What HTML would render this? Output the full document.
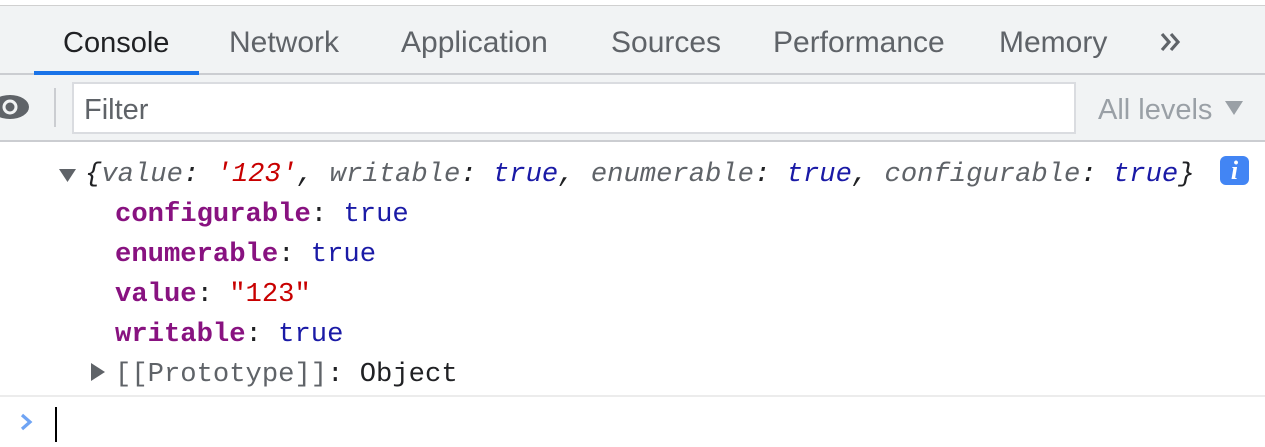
<!DOCTYPE html>
<html><head><style>
html,body{margin:0;padding:0;width:1265px;height:447px;overflow:hidden;background:#fff;position:relative}
.a{position:absolute;white-space:pre}
.tab{position:absolute;top:23px;font:30px "Liberation Sans",sans-serif;color:#5f6368;line-height:40px}
.m{position:absolute;font:27.2px "Liberation Mono",monospace;line-height:40px;white-space:pre;color:#202124}
.k{color:#881280;font-weight:bold}
.t{color:#1a1aa6}
.s{color:#c80000}
.g{color:#5f6368}
i{font-style:italic}
</style></head><body>
<div class="a" style="left:0;top:0;width:1265px;height:5px;background:#fff"></div>
<div class="a" style="left:0;top:5px;width:1265px;height:1px;background:#d0d0d0"></div>
<div class="a" style="left:0;top:6px;width:1265px;height:67px;background:#f1f3f4"></div>
<div class="a" style="left:0;top:73px;width:1265px;height:2px;background:#cbcdd1"></div>
<div class="a" style="left:34px;top:71px;width:165px;height:4px;background:#1a73e8"></div>
<div class="tab" style="left:63px;color:#202124;font-size:29px">Console</div>
<div class="tab" style="left:229px">Network</div>
<div class="tab" style="left:401px">Application</div>
<div class="tab" style="left:611px">Sources</div>
<div class="tab" style="left:773px">Performance</div>
<div class="tab" style="left:999px">Memory</div>
<svg class="a" style="left:1158px;top:28px" width="28" height="28" viewBox="0 0 28 28"><path d="M4 6l7 8-7 8M13 6l7 8-7 8" fill="none" stroke="#5f6368" stroke-width="3.2"/></svg>
<div class="a" style="left:0;top:75px;width:1265px;height:65px;background:#f1f3f4"></div>
<div class="a" style="left:0;top:140px;width:1265px;height:2px;background:#cbcdd1"></div>
<svg class="a" style="left:-10px;top:92px" width="40" height="30" viewBox="0 0 40 30"><ellipse cx="20" cy="15" rx="19" ry="12" fill="#5f6368"/><circle cx="20" cy="15" r="7.5" fill="#f1f3f4"/><circle cx="20" cy="15" r="4.5" fill="#5f6368"/></svg>
<div class="a" style="left:54px;top:88px;width:2px;height:39px;background:#cbcdd1"></div>
<div class="a" style="left:72px;top:82px;width:1000px;height:48px;background:#fff;border:2px solid #dadce0"></div>
<div class="tab" style="left:84px;top:90px;color:#5f6368;font-size:29px">Filter</div>
<div class="tab" style="left:1098px;top:90px;color:#9aa0a6;font-size:29px">All levels</div>
<svg class="a" style="left:1224px;top:100px" width="20" height="16" viewBox="0 0 20 16"><path d="M1 1h18L10 15z" fill="#9aa0a6"/></svg>
<svg class="a" style="left:58px;top:167px" width="20" height="16"><path d="M1 2h17L9.5 15z" fill="#5f6368"/></svg>
<div class="m" style="left:85px;top:155px"><i>{<span class="g">value</span>: <span class="s">'123'</span>, <span class="g">writable</span>: <span class="t">true</span>, <span class="g">enumerable</span>: <span class="t">true</span>, <span class="g">configurable</span>: <span class="t">true</span>}</i></div>
<div class="a" style="left:1220px;top:156px;width:29px;height:29px;background:#4285f4;border-radius:6px;color:#fff;font:bold italic 26px 'Liberation Serif',serif;text-align:center;line-height:29px">i</div>
<div class="m" style="left:115px;top:195px"><span class="k">configurable</span>: <span class="t">true</span></div>
<div class="m" style="left:115px;top:235px"><span class="k">enumerable</span>: <span class="t">true</span></div>
<div class="m" style="left:115px;top:275px"><span class="k">value</span>: <span class="s">"123"</span></div>
<div class="m" style="left:115px;top:315px"><span class="k">writable</span>: <span class="t">true</span></div>
<svg class="a" style="left:90px;top:362px" width="16" height="20"><path d="M1 1v18l14-9z" fill="#5f6368"/></svg>
<div class="m" style="left:115px;top:355px"><span class="g">[[Prototype]]</span>: Object</div>
<div class="a" style="left:0;top:395px;width:1265px;height:2px;background:#ececec"></div>
<svg class="a" style="left:18px;top:412px" width="18" height="20"><path d="M4 3l8 7-8 7" fill="none" stroke="#6fa4f4" stroke-width="3.2"/></svg>
<div class="a" style="left:55px;top:407px;width:2px;height:35px;background:#000"></div>
</body></html>
